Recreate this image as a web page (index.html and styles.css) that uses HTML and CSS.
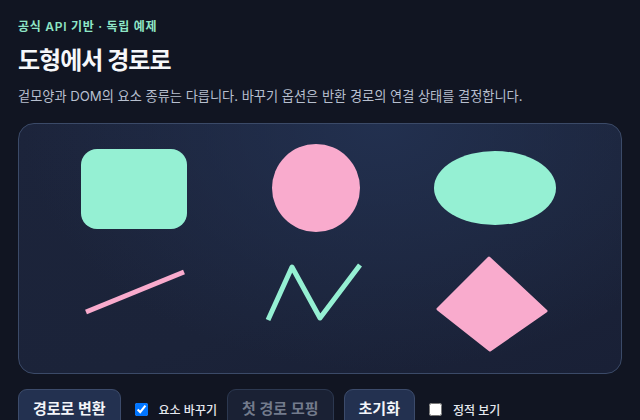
FILE: index.html
```html
<!DOCTYPE html>
<html lang="ko">
<head>
<meta charset="utf-8">
<link rel="stylesheet" href="styles.css">
</head>
<body>
<main class="page">
  <p class="eyebrow">공식 API 기반 · 독립 예제</p>
  <h1 class="title">도형에서 경로로</h1>
  <p class="lead">겉모양과 DOM의 요소 종류는 다릅니다. 바꾸기 옵션은 반환 경로의 연결 상태를 결정합니다.</p>
  <div class="stage">
    <svg class="shapes" viewBox="0 0 602 249" xmlns="http://www.w3.org/2000/svg">
      <rect x="62" y="25" width="106" height="80" rx="16" fill="#95f0d3"/>
      <circle cx="297" cy="64" r="44" fill="#f9abcd"/>
      <ellipse cx="476" cy="64" rx="61" ry="37" fill="#95f0d3"/>
      <line x1="67" y1="188" x2="165" y2="148" stroke="#f9abcd" stroke-width="5"/>
      <polyline points="249,196 273,143 301,194 341,141" fill="none" stroke="#95f0d3" stroke-width="5" stroke-linejoin="round"/>
      <polygon points="470,134 527,187 471,226 419,185" fill="#f9abcd" stroke="#f9abcd" stroke-width="3" stroke-linejoin="round"/>
    </svg>
  </div>
  <div class="controls">
    <button class="btn" type="button">경로로 변환</button>
    <label class="check"><input type="checkbox" checked>요소 바꾸기</label>
    <button class="btn" type="button" disabled>첫 경로 모핑</button>
    <button class="btn" type="button">초기화</button>
    <label class="check"><input type="checkbox">정적 보기</label>
  </div>
</main>
</body>
</html>
```
FILE: styles.css
```css
* { box-sizing: border-box; }
html, body {
  margin: 0;
  background: #111522;
  height: 100%;
  overflow: hidden;
}
body {
  font-family: "Inter", "Noto Sans CJK KR", sans-serif;
  color: #f3f5f9;
}
.page {
  padding: 19px 18px 0;
}
.eyebrow {
  margin: 0;
  font-size: 12px;
  line-height: 16px;
  font-weight: 600;
  letter-spacing: 0.06em;
  color: #8ee6c6;
}
.title {
  margin: 10px 0 0;
  font-size: 24px;
  line-height: 32px;
  font-weight: 700;
  letter-spacing: -0.04em;
  color: #f6f7fa;
}
.lead {
  margin: 9px 0 0;
  font-size: 13.2px;
  line-height: 20px;
  color: #b7bfce;
}
.stage {
  margin-top: 17px;
  height: 251px;
  border: 1px solid #3b4a68;
  border-radius: 16px;
  background: radial-gradient(ellipse at 60% 0%, #22304f 0%, rgba(34,48,79,0) 70%),
              linear-gradient(160deg, #1c243b 0%, #1b2339 60%, #192036 100%);
  overflow: hidden;
}
.shapes {
  display: block;
  width: 100%;
  height: 100%;
}
.controls {
  margin-top: 15px;
  display: flex;
  align-items: center;
  gap: 10px;
}
.btn {
  font-family: inherit;
  font-size: 15px;
  font-weight: 700;
  line-height: 20px;
  padding: 9px 14px;
  border-radius: 9px;
  border: 1px solid #3c4b6b;
  background: #233150;
  color: #f3f5f9;
}
.btn:disabled {
  background: #1a2134;
  border-color: #2c3850;
  color: #737b8c;
  font-weight: 600;
}
.check {
  display: inline-flex;
  align-items: center;
  gap: 8px;
  font-size: 12px;
  font-weight: 500;
  color: #e6e9ef;
}
.check input {
  margin: 3px 3px 3px 4px;
  width: 13px;
  height: 13px;
}
```
